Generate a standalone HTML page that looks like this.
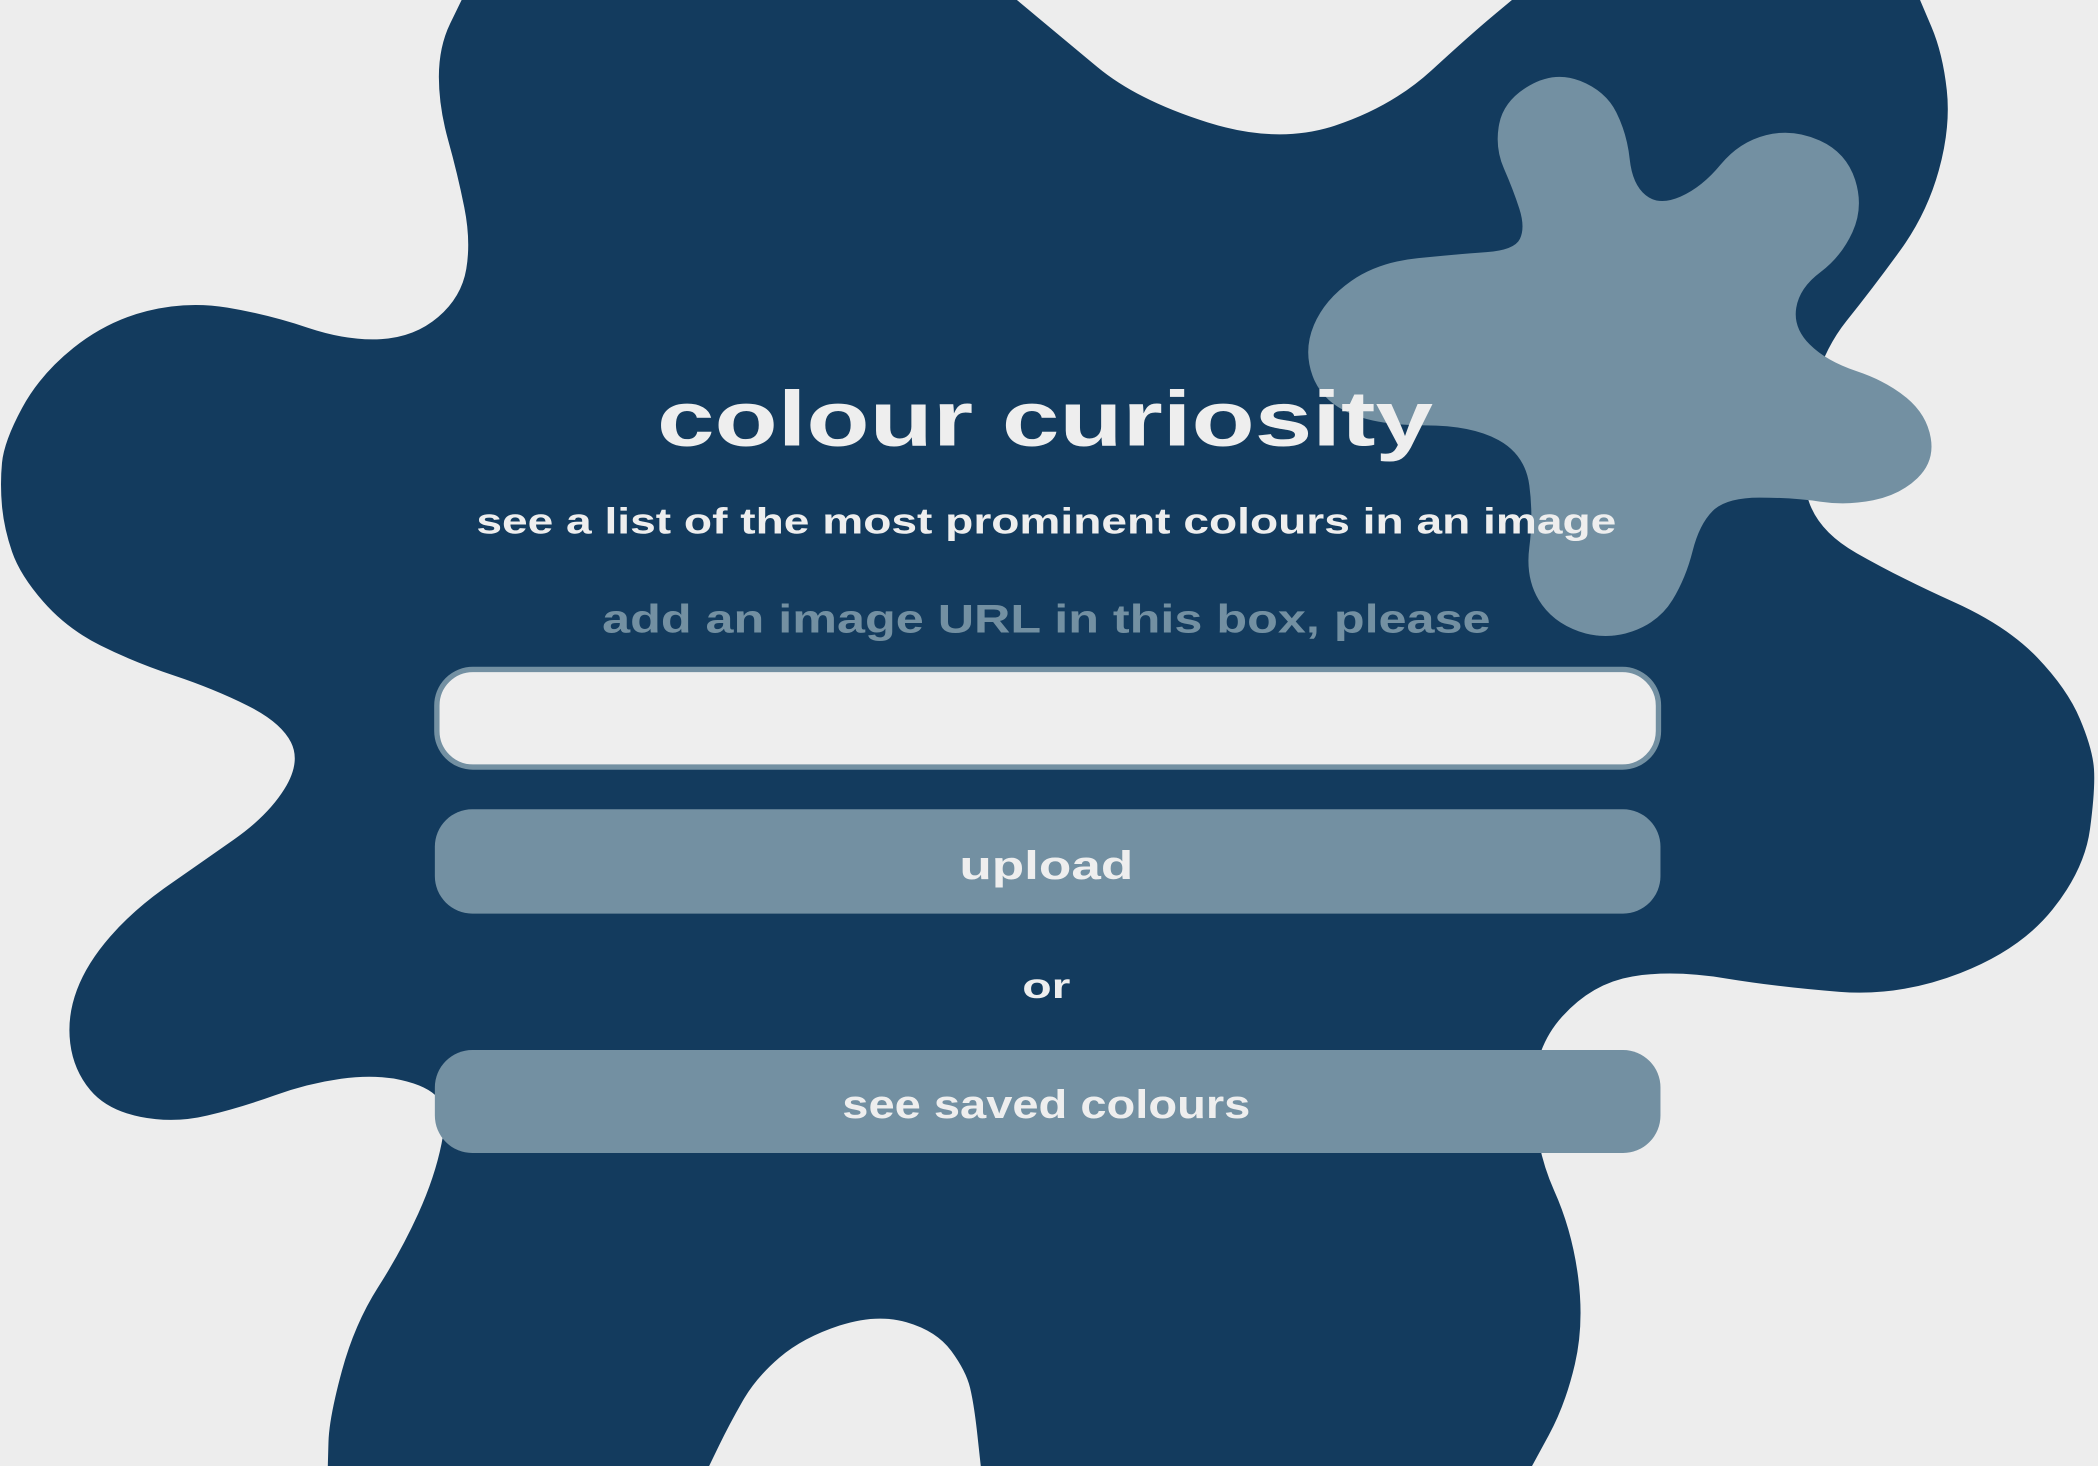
<!DOCTYPE html>
<html><head><meta charset="utf-8">
<style>
html,body{margin:0;padding:0;background:#ededed;overflow:hidden;width:2098px;height:1466px}
#w{position:relative;width:2098px;height:1466px;overflow:hidden}
svg{display:block;overflow:hidden}
text{font-family:"Liberation Sans","DejaVu Sans",sans-serif;font-weight:bold;text-anchor:middle}
</style></head>
<body>
<div id="w">
<svg id="s" width="2098" height="1466" viewBox="0 0 1568 1096" preserveAspectRatio="none" xmlns="http://www.w3.org/2000/svg">
<rect width="1568" height="1096" fill="#ededed"/>
<path id="dark" fill="#133b5e" d=""/>
<path id="light" fill="#7390a2" d=""/>
<text x="781" y="333" font-size="58" fill="#eeeeee" textLength="580" lengthAdjust="spacingAndGlyphs">colour curiosity</text>
<text x="782" y="399" font-size="27" fill="#eeeeee" textLength="852" lengthAdjust="spacingAndGlyphs">see a list of the most prominent colours in an image</text>
<text x="782" y="473" font-size="30" fill="#7390a2" textLength="664" lengthAdjust="spacingAndGlyphs">add an image URL in this box, please</text>
<rect x="326.5" y="500.5" width="913" height="73" rx="27" fill="#eeeeee" stroke="#7390a2" stroke-width="4"/>
<rect x="325" y="605" width="916" height="78" rx="28" fill="#7390a2"/>
<text x="782" y="657" font-size="30" fill="#eeeeee" textLength="130" lengthAdjust="spacingAndGlyphs">upload</text>
<text x="782" y="746" font-size="26" fill="#eeeeee" textLength="36" lengthAdjust="spacingAndGlyphs">or</text>
<rect x="325" y="785" width="916" height="77" rx="28" fill="#7390a2"/>
<text x="782" y="836" font-size="30" fill="#eeeeee" textLength="305" lengthAdjust="spacingAndGlyphs">see saved colours</text>
</svg>
</div>
<script>
function sm(p){
  var n=p.length,d="";
  function m(a,b){return [(a[0]+b[0])/2,(a[1]+b[1])/2];}
  var s=m(p[n-1],p[0]);d="M"+s[0]+" "+s[1];
  for(var i=0;i<n;i++){var c=p[i],e=m(p[i],p[(i+1)%n]);d+=" Q"+c[0]+" "+c[1]+" "+e[0]+" "+e[1];}
  return d+"Z";
}
var dark=[[345,0],[345,0],[760,0],[760,0],[790,25],[850,75],[955,108],[1040,80],[1100,25],[1130,0],[1130,0],[1435,0],[1435,0],[1452,40],[1458,95],[1440,160],[1400,215],[1360,265],[1345,340],[1355,395],[1420,432],[1500,468],[1545,515],[1564,560],[1566,590],[1558,650],[1510,710],[1420,745],[1330,738],[1250,725],[1190,735],[1145,785],[1148,860],[1175,920],[1184,990],[1170,1050],[1145,1096],[1145,1096],[733,1096],[733,1096],[728,1050],[722,1025],[700,995],[655,982],[600,1000],[565,1030],[545,1065],[530,1096],[530,1096],[245,1096],[245,1096],[246,1060],[265,990],[300,935],[325,880],[335,830],[320,812],[280,803],[230,810],[180,828],[130,840],[80,830],[55,800],[50,760],[65,720],[100,680],[150,645],[200,610],[225,570],[210,540],[160,515],[100,495],[50,470],[15,430],[3,395],[0,362],[3,330],[30,280],[80,240],[140,225],[200,235],[260,255],[310,252],[345,222],[352,180],[342,130],[328,80],[328,35]];
var light=[[1162,53],[1200,68],[1216,100],[1220,138],[1240,154],[1272,140],[1300,106],[1340,96],[1380,114],[1393,155],[1376,192],[1345,215],[1340,245],[1365,270],[1410,285],[1440,310],[1446,345],[1420,370],[1380,378],[1340,372],[1290,372],[1270,392],[1260,432],[1240,465],[1200,479],[1160,465],[1140,432],[1146,386],[1140,340],[1100,318],[1030,318],[988,300],[974,262],[990,224],[1030,196],[1090,190],[1132,187],[1140,170],[1131,142],[1117,110],[1124,75]];
document.getElementById("dark").setAttribute("d",sm(dark));
document.getElementById("light").setAttribute("d",sm(light));
</script>
</body></html>
